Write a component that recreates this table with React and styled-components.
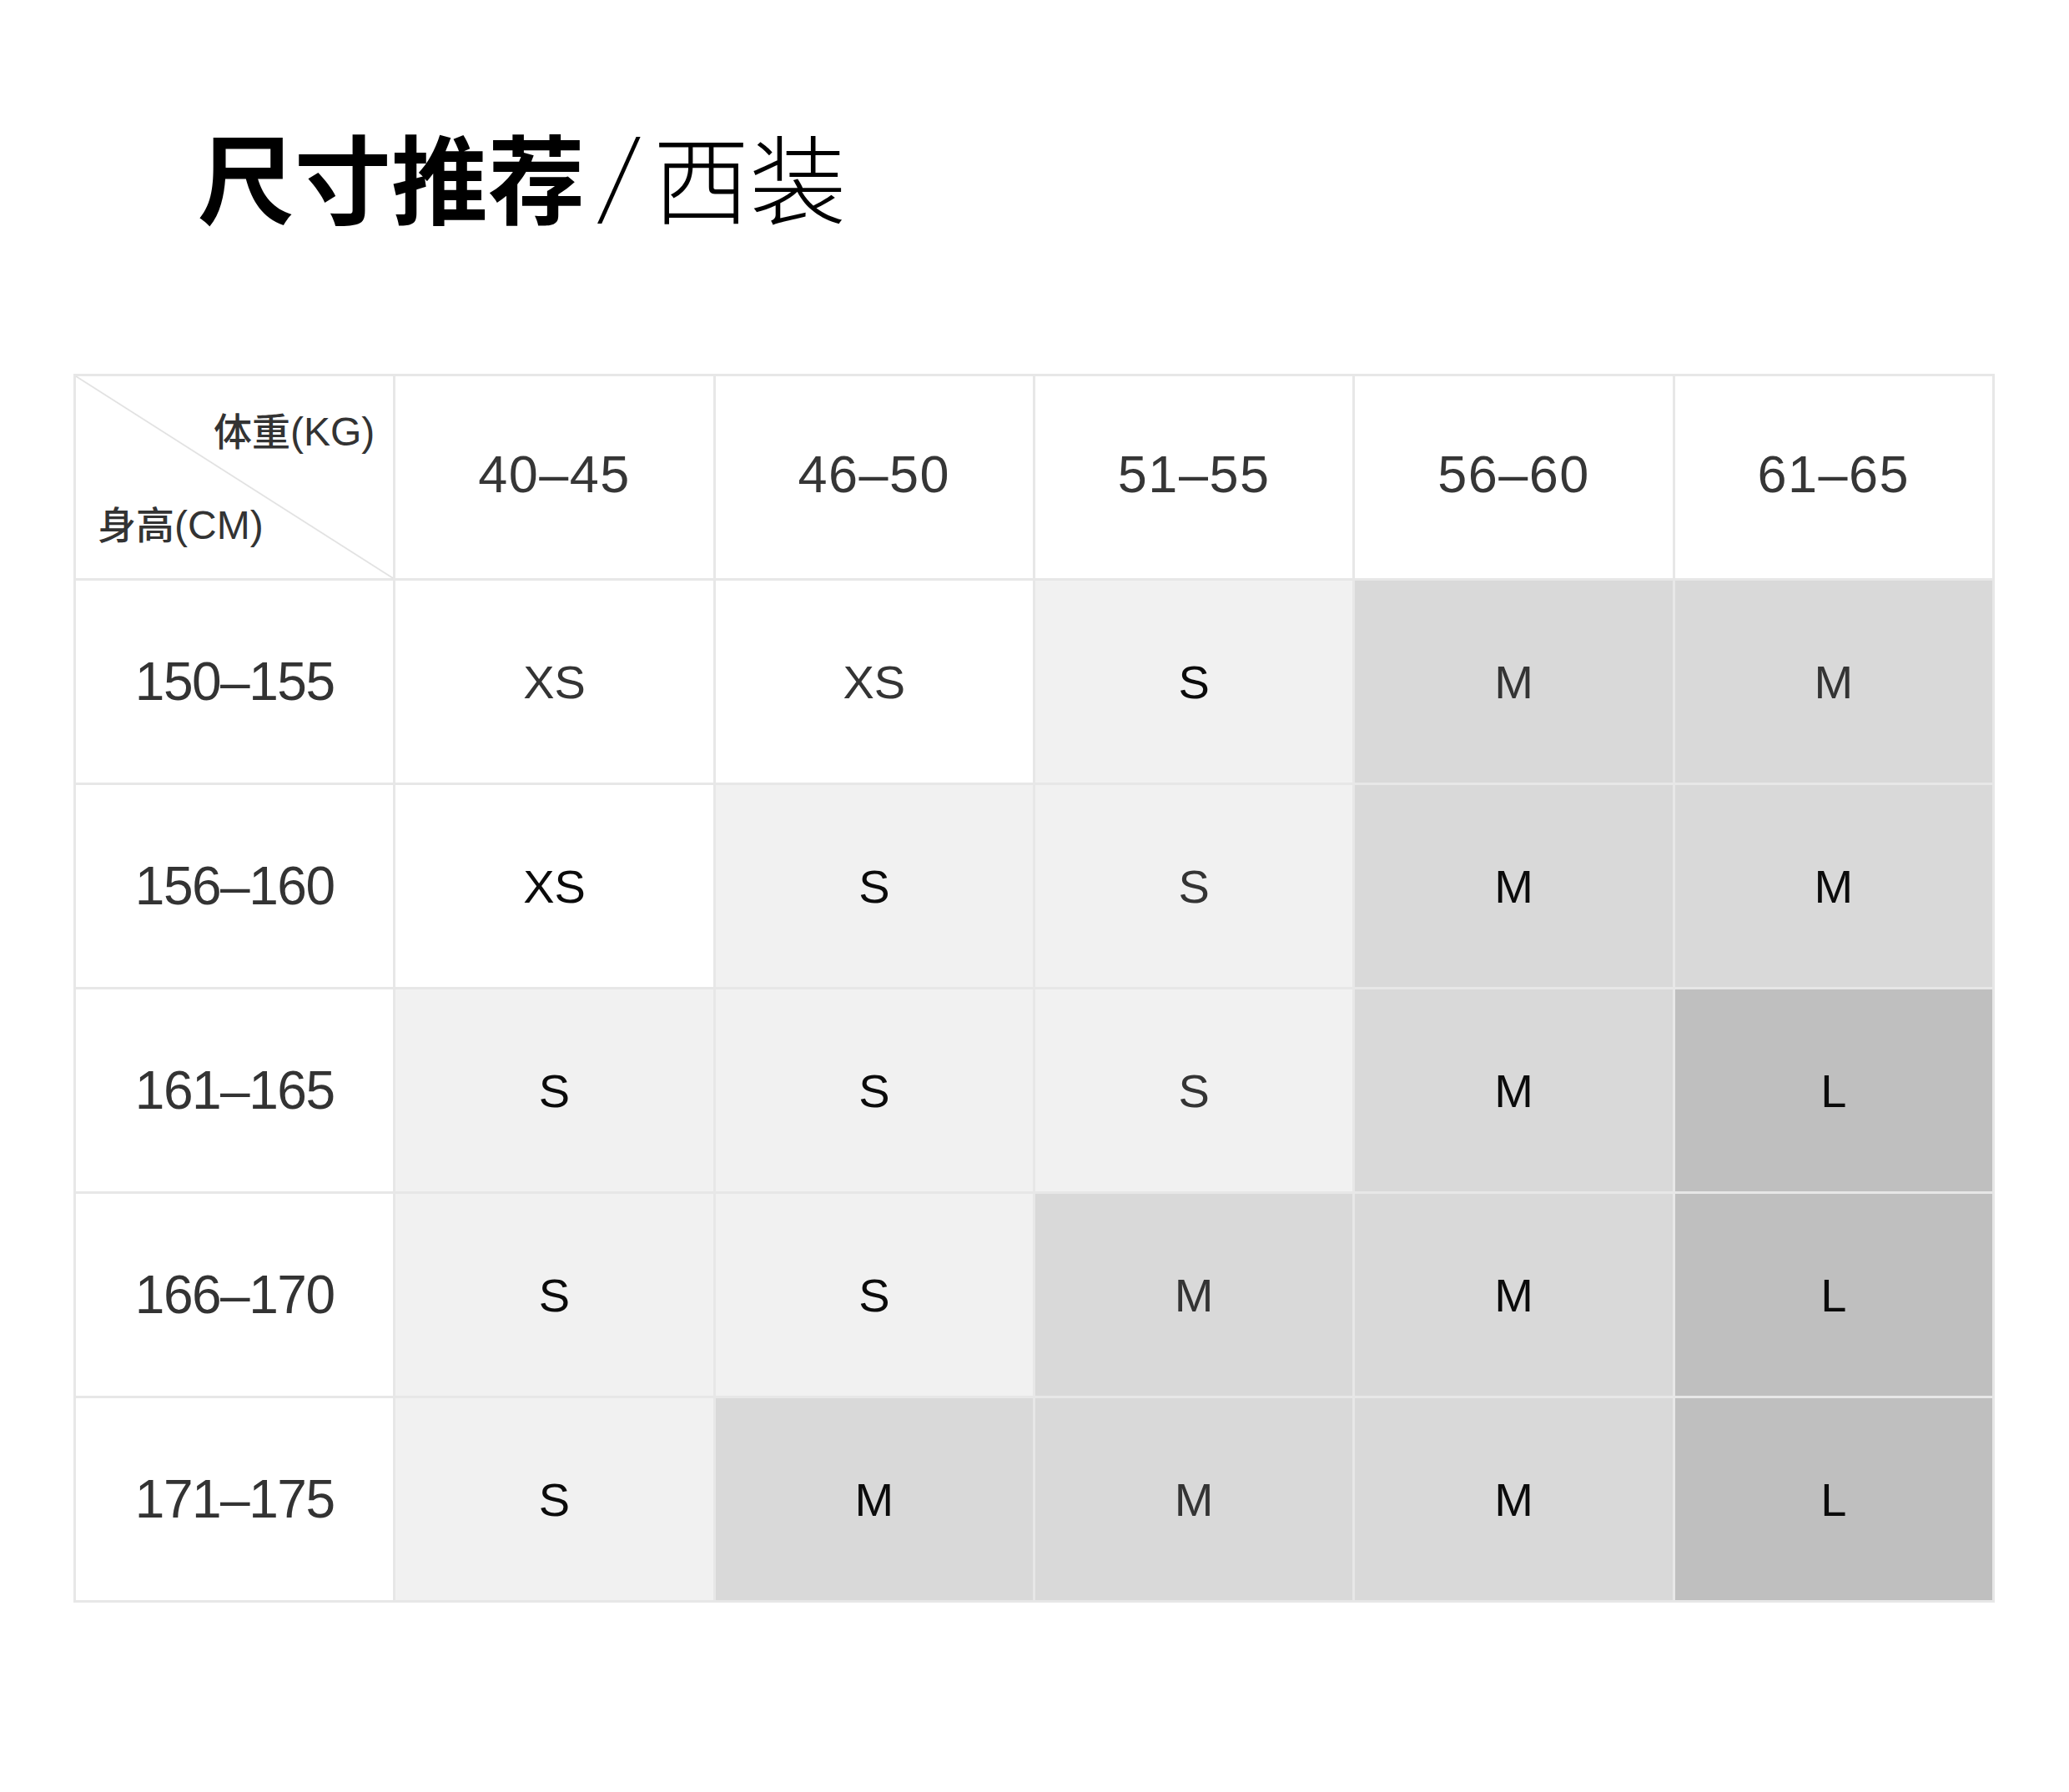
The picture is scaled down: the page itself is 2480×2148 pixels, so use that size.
import React from "react";
import styled, { createGlobalStyle } from "styled-components";

const Global = createGlobalStyle`
  html, body { margin: 0; padding: 0; background: #ffffff; }
  body { font-family: "Liberation Sans", Arial, sans-serif; }
`;

const Page = styled.div`
  display: flex;
  flex-direction: column;
  align-items: flex-start;
  padding: 151px 88px 0 88px;
  width: 2303px;
`;

const Title = styled.h1`
  margin: 0 0 181px 149px;
  height: 116px;
  font-family: "Noto Sans CJK SC", sans-serif;
  font-size: 116px;
  line-height: 1;
  font-weight: 700;
  color: #000;
  display: flex;
  align-items: baseline;
  white-space: nowrap;
`;

const TitleLight = styled.span`
  font-weight: 200;
`;

const Slash = styled.span`
  font-family: "Noto Sans CJK SC", sans-serif;
  font-weight: 200;
  font-size: 108px;
  line-height: 1;
  margin: 0 18px 0 21px;
  transform: translateY(-11px) skewX(-6deg);
`;

const Grid = styled.div`
  display: grid;
  grid-template-columns: repeat(6, 1fr);
  grid-auto-rows: 242px;
  gap: 3px;
  padding: 3px;
  width: 100%;
  box-sizing: border-box;
  background: #e7e7e7;
`;

const shades = {
  w: "#ffffff",
  l: "#f1f1f1",
  m: "#d9d9d9",
  d: "#bfbfbf",
};

const Cell = styled.div`
  display: flex;
  align-items: center;
  justify-content: center;
  background: ${(p) => shades[p.$shade] || "#fff"};
  color: ${(p) => (p.$dark ? "#0b0b0b" : "#343434")};
  font-family: "Liberation Sans", Arial, sans-serif;
  font-size: 56px;
`;

const HeadCell = styled(Cell)`
  font-size: 63px;
  color: #363636;
  letter-spacing: 1.5px;
  padding-bottom: 9px;
`;

const RowLabel = styled(Cell)`
  font-size: 64px;
  color: #333;
  letter-spacing: -1.5px;
`;

const Corner = styled.div`
  display: flex;
  flex-direction: column;
  justify-content: space-between;
  padding: 38px 22px 36px 26px;
  background: linear-gradient(
      to top right,
      #ffffff calc(50% - 1.5px),
      #dcdcdc 50%,
      #ffffff calc(50% + 1.5px)
    );
  font-family: "Liberation Sans", "Noto Sans CJK SC", sans-serif;
  font-size: 48px;
  color: #333;
  line-height: 1.1;
`;

const CornerTop = styled.span`
  align-self: flex-end;
`;

const CornerBottom = styled.span`
  align-self: flex-start;
`;

const Cjk = styled.span`
  font-family: "Noto Sans CJK SC", sans-serif;
  font-weight: 500;
  font-size: 46px;
`;

const weights = ["40–45", "46–50", "51–55", "56–60", "61–65"];

const rows = [
  {
    label: "150–155",
    cells: [
      ["XS", "w", 0],
      ["XS", "w", 0],
      ["S", "l", 1],
      ["M", "m", 0],
      ["M", "m", 0],
    ],
  },
  {
    label: "156–160",
    cells: [
      ["XS", "w", 1],
      ["S", "l", 1],
      ["S", "l", 0],
      ["M", "m", 1],
      ["M", "m", 1],
    ],
  },
  {
    label: "161–165",
    cells: [
      ["S", "l", 1],
      ["S", "l", 1],
      ["S", "l", 0],
      ["M", "m", 1],
      ["L", "d", 1],
    ],
  },
  {
    label: "166–170",
    cells: [
      ["S", "l", 1],
      ["S", "l", 1],
      ["M", "m", 0],
      ["M", "m", 1],
      ["L", "d", 1],
    ],
  },
  {
    label: "171–175",
    cells: [
      ["S", "l", 1],
      ["M", "m", 1],
      ["M", "m", 0],
      ["M", "m", 1],
      ["L", "d", 1],
    ],
  },
];

export default function App() {
  return (
    <>
      <Global />
      <Page>
        <Title>
          尺寸推荐
          <Slash>/</Slash>
          <TitleLight>西装</TitleLight>
        </Title>
        <Grid>
          <Corner>
            <CornerTop>
              <Cjk>体重</Cjk>(KG)
            </CornerTop>
            <CornerBottom>
              <Cjk>身高</Cjk>(CM)
            </CornerBottom>
          </Corner>
          {weights.map((w) => (
            <HeadCell key={w} $shade="w">
              {w}
            </HeadCell>
          ))}
          {rows.map((r) => (
            <React.Fragment key={r.label}>
              <RowLabel $shade="w">{r.label}</RowLabel>
              {r.cells.map(([t, s, d], i) => (
                <Cell key={i} $shade={s} $dark={!!d}>
                  {t}
                </Cell>
              ))}
            </React.Fragment>
          ))}
        </Grid>
      </Page>
    </>
  );
}
